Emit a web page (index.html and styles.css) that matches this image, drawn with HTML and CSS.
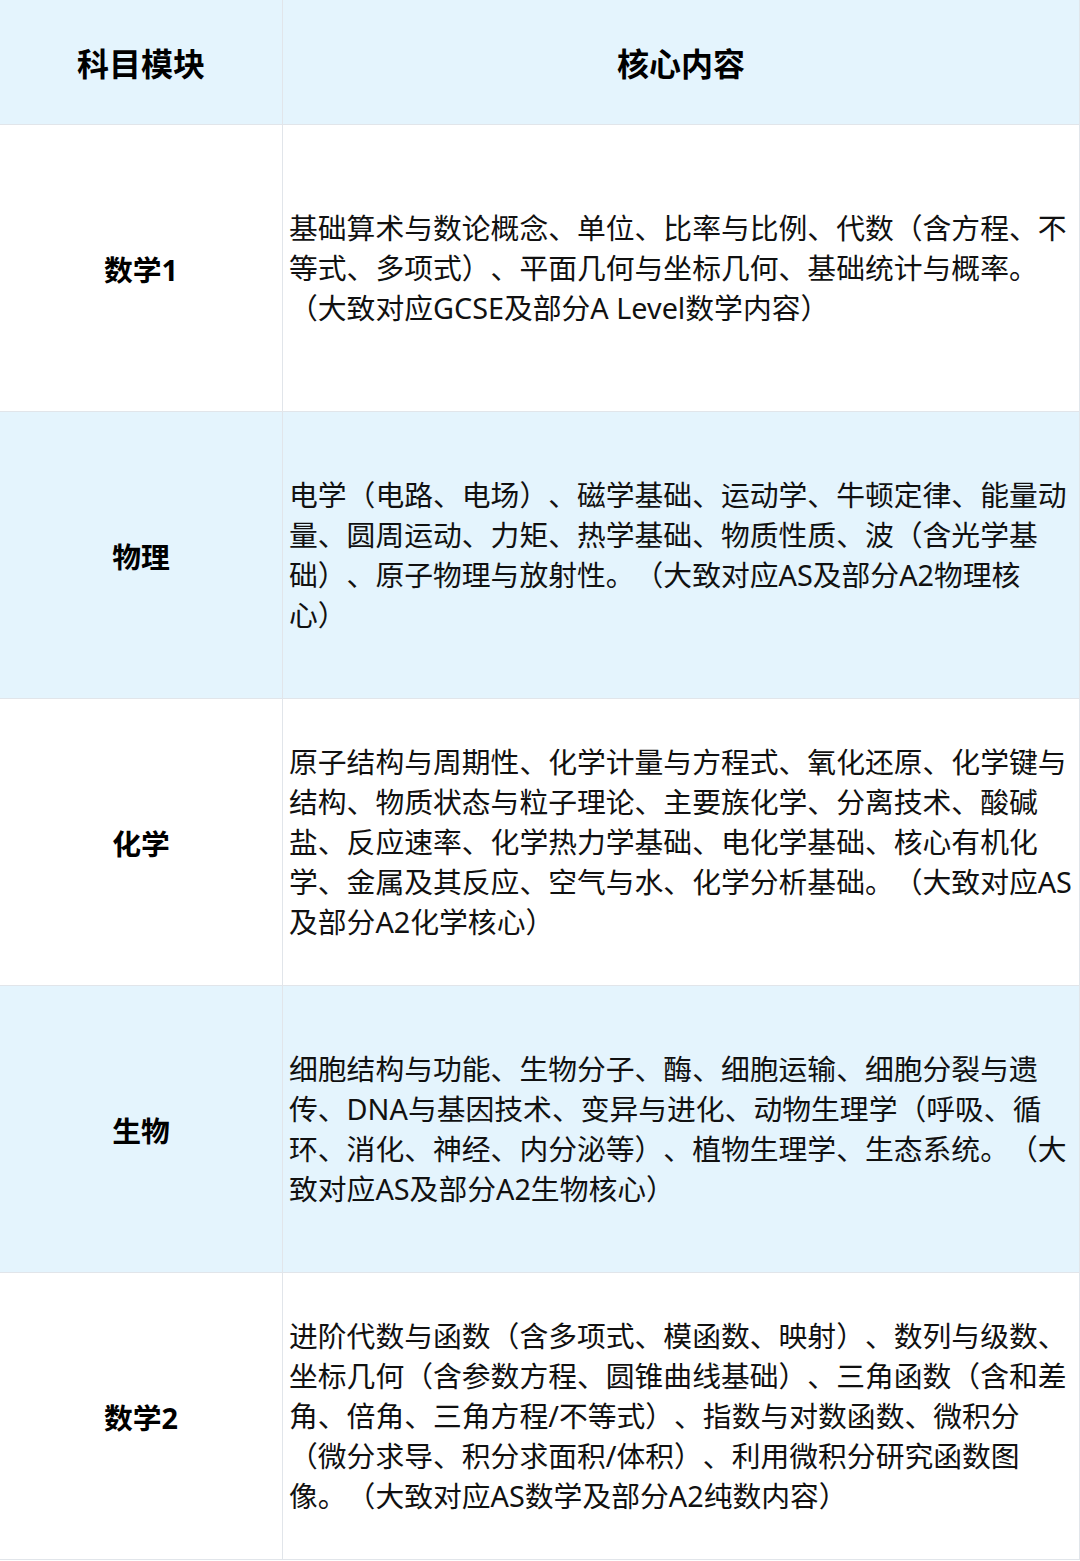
FILE: index.html
```html
<!DOCTYPE html>
<html lang="zh-CN">
<head>
<meta charset="utf-8">
<title>科目模块</title>
<link rel="stylesheet" href="styles.css">
</head>
<body>
<table class="syllabus">
  <colgroup>
    <col class="col-subject">
    <col class="col-content">
  </colgroup>
  <thead>
    <tr class="head-row">
      <th class="cell subject">科目模块</th>
      <th class="cell head-content">核心内容</th>
    </tr>
  </thead>
  <tbody>
    <tr class="row">
      <td class="cell subject">数学1</td>
      <td class="cell content">基础算术与数论概念、单位、比率与比例、代数（含方程、不等式、多项式）、平面几何与坐标几何、基础统计与概率。（大致对应GCSE及部分A Level数学内容）</td>
    </tr>
    <tr class="row alt">
      <td class="cell subject">物理</td>
      <td class="cell content">电学（电路、电场）、磁学基础、运动学、牛顿定律、能量动量、圆周运动、力矩、热学基础、物质性质、波（含光学基础）、原子物理与放射性。（大致对应AS及部分A2物理核心）</td>
    </tr>
    <tr class="row">
      <td class="cell subject">化学</td>
      <td class="cell content">原子结构与周期性、化学计量与方程式、氧化还原、化学键与结构、物质状态与粒子理论、主要族化学、分离技术、酸碱盐、反应速率、化学热力学基础、电化学基础、核心有机化学、金属及其反应、空气与水、化学分析基础。（大致对应AS及部分A2化学核心）</td>
    </tr>
    <tr class="row alt">
      <td class="cell subject">生物</td>
      <td class="cell content">细胞结构与功能、生物分子、酶、细胞运输、细胞分裂与遗传、DNA与基因技术、变异与进化、动物生理学（呼吸、循环、消化、神经、内分泌等）、植物生理学、生态系统。（大致对应AS及部分A2生物核心）</td>
    </tr>
    <tr class="row">
      <td class="cell subject">数学2</td>
      <td class="cell content">进阶代数与函数（含多项式、模函数、映射）、数列与级数、坐标几何（含参数方程、圆锥曲线基础）、三角函数（含和差角、倍角、三角方程/不等式）、指数与对数函数、微积分（微分求导、积分求面积/体积）、利用微积分研究函数图像。（大致对应AS数学及部分A2纯数内容）</td>
    </tr>
  </tbody>
</table>
</body>
</html>
```

FILE: styles.css
```css
html, body {
  margin: 0;
  padding: 0;
  background: #ffffff;
}

body {
  font-family: "Noto Sans", "Noto Sans CJK SC", sans-serif;
  color: #111111;
  text-spacing-trim: space-all;
}

.syllabus {
  width: 1080px;
  table-layout: fixed;
  border-collapse: separate;
  border-spacing: 0;
}

.col-subject {
  width: 283px;
}

.col-content {
  width: 797px;
}

.cell {
  border-right: 1px solid #e1e5ea;
  border-bottom: 1px solid #e1e5ea;
  vertical-align: middle;
  padding: 0;
}

.head-row {
  height: 125px;
  background: #e4f4fd;
}

.head-row .cell {
  font-size: 32px;
  font-weight: 700;
  text-align: center;
  color: #000000;
}

.row {
  height: 287px;
}

.row.alt {
  background: #e4f4fd;
}

.row .subject {
  font-size: 28.8px;
  font-weight: 700;
  text-align: center;
  color: #000000;
}

.content {
  font-size: 28.8px;
  line-height: 40px;
  text-align: left;
  padding: 0 5px 0 6px;
  letter-spacing: 0;
}
```
